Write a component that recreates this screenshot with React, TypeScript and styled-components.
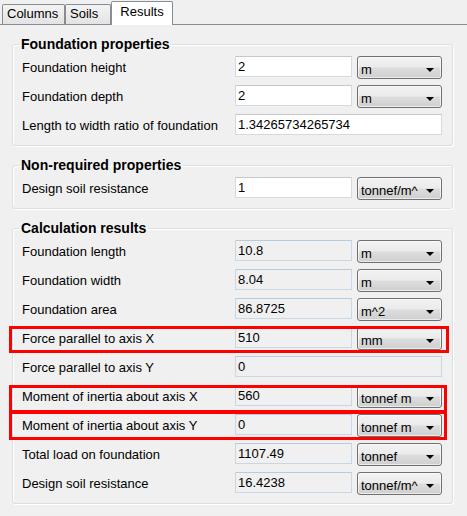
import React from "react";
import styled, { createGlobalStyle, css } from "styled-components";

const Global = createGlobalStyle`
  html, body { margin: 0; padding: 0; background: #f0f0f0; }
  body { font-family: "Liberation Sans", Arial, sans-serif; font-size: 13px; color: #000; }
  * { box-sizing: border-box; }
`;

const Window = styled.div`
  width: 467px;
  height: 516px;
  background: #f0f0f0;
  overflow: hidden;
`;

const TabStrip = styled.div`
  display: flex;
  align-items: flex-end;
  height: 25px;
  padding-left: 2px;
  border-bottom: 1px solid #898c95;
`;

const Tab = styled.div<{ $active?: boolean; $w: number; $ml?: number }>`
  width: ${(p) => p.$w}px;
  margin-left: ${(p) => p.$ml ?? 0}px;
  border: 1px solid #898c95;
  border-bottom: none;
  border-radius: 2px 2px 0 0;
  white-space: nowrap;
  line-height: 15px;
  ${(p) =>
    p.$active
      ? css`
          height: 24px;
          margin-bottom: -1px;
          background: #ffffff;
          padding-top: 2px;
          text-align: center;
          position: relative;
        `
      : css`
          height: 20px;
          background: linear-gradient(#f3f3f3, #e3e3e3);
          padding-top: 1px;
          padding-left: 4px;
        `}
`;

const Page = styled.div`
  padding: 11px 0 0 12px;
  display: flex;
  flex-direction: column;
  gap: 11px;
`;

const Group = styled.fieldset`
  margin: 0;
  min-width: 0;
  width: 441px;
  border: 1px solid #d5dfe5;
  border-radius: 3px;
  box-shadow: inset 1px 1px 0 #ffffff, 1px 1px 0 #ffffff;
  padding: 4px 0 8px 9px;
  display: flex;
  flex-direction: column;
  gap: 6px;
`;

const Legend = styled.legend`
  font-weight: bold;
  font-size: 14px;
  line-height: 16px;
  padding: 0 2px;
  margin-left: -3px;
`;

const Row = styled.div<{ $hl?: { t: number; b: number; r: number } }>`
  position: relative;
  display: grid;
  grid-template-columns: 208px 117px 85px;
  column-gap: 5px;
  height: 23px;
  align-items: start;
  ${(p) =>
    p.$hl &&
    css`
      &::after {
        content: "";
        position: absolute;
        left: -13px;
        top: ${p.$hl.t}px;
        bottom: ${p.$hl.b}px;
        right: ${p.$hl.r}px;
        border: 3px solid #ff0000;
        pointer-events: none;
      }
    `}
`;

const Label = styled.div`
  line-height: 15px;
  padding-top: 4px;
  white-space: nowrap;
`;

const Field = styled.div<{ $readOnly?: boolean; $wide?: boolean }>`
  height: 21px;
  border: 1px solid ${(p) => (p.$readOnly ? "#c9d7e4" : "#d6dadf")};
  border-top-color: ${(p) => (p.$readOnly ? "#b5cbe0" : "#c4c8ce")};
  background: ${(p) => (p.$readOnly ? "#f0f0f0" : "#ffffff")};
  padding: 2px 2px 0;
  line-height: 15px;
  white-space: nowrap;
  overflow: hidden;
  ${(p) => p.$wide && css`grid-column: 2 / span 2;`}
`;

const Combo = styled.div`
  height: 23px;
  border: 1px solid #707070;
  border-radius: 3px;
  background: linear-gradient(#f2f2f2 0%, #ebebeb 48%, #dddddd 52%, #cfcfcf 100%);
  box-shadow: inset 0 0 0 1px rgba(255, 255, 255, 0.6);
  display: flex;
  align-items: center;
  justify-content: space-between;
  padding: 1px 7px 0 3px;
  line-height: 15px;
  white-space: nowrap;
  overflow: hidden;
`;

const ComboText = styled.span`
  padding-top: 2px;
`;

const Arrow = () => (
  <svg width="8" height="4" viewBox="0 0 8 4" style={{ marginTop: 3, flex: "none" }}>
    <path d="M0 0H8L4 4Z" fill="#000" />
  </svg>
);

type RowData = {
  label: string;
  value: string;
  unit?: string;
  readOnly?: boolean;
  hl?: { t: number; b: number; r: number };
};

const FieldRow = ({ label, value, unit, readOnly, hl }: RowData) => (
  <Row $hl={hl}>
    <Label>{label}</Label>
    <Field $readOnly={readOnly} $wide={!unit}>
      {value}
    </Field>
    {unit && (
      <Combo>
        <ComboText>{unit}</ComboText>
        <Arrow />
      </Combo>
    )}
  </Row>
);

const props1: RowData[] = [
  { label: "Foundation height", value: "2", unit: "m" },
  { label: "Foundation depth", value: "2", unit: "m" },
  { label: "Length to width ratio of foundation", value: "1.34265734265734" },
];

const props2: RowData[] = [
  { label: "Design soil resistance", value: "1", unit: "tonnef/m^" },
];

const results: RowData[] = [
  { label: "Foundation length", value: "10.8", unit: "m", readOnly: true },
  { label: "Foundation width", value: "8.04", unit: "m", readOnly: true },
  { label: "Foundation area", value: "86.8725", unit: "m^2", readOnly: true },
  { label: "Force parallel to axis X", value: "510", unit: "mm", readOnly: true, hl: { t: -1, b: -3, r: 3 } },
  { label: "Force parallel to axis Y", value: "0", readOnly: true },
  { label: "Moment of inertia about axis X", value: "560", unit: "tonnef m", readOnly: true, hl: { t: 0, b: -5, r: 5 } },
  { label: "Moment of inertia about axis Y", value: "0", unit: "tonnef m", readOnly: true, hl: { t: -3, b: -3, r: 5 } },
  { label: "Total load on foundation", value: "1107.49", unit: "tonnef", readOnly: true },
  { label: "Design soil resistance", value: "16.4238", unit: "tonnef/m^", readOnly: true },
];

export default function App() {
  return (
    <Window>
      <Global />
      <TabStrip>
        <Tab $w={63}>Columns</Tab>
        <Tab $w={46}>Soils</Tab>
        <Tab $w={62} $active>
          Results
        </Tab>
      </TabStrip>
      <Page>
        <Group>
          <Legend>Foundation properties</Legend>
          {props1.map((r) => (
            <FieldRow key={r.label} {...r} />
          ))}
        </Group>
        <Group>
          <Legend>Non-required properties</Legend>
          {props2.map((r) => (
            <FieldRow key={r.label} {...r} />
          ))}
        </Group>
        <Group>
          <Legend>Calculation results</Legend>
          {results.map((r) => (
            <FieldRow key={r.label} {...r} />
          ))}
        </Group>
      </Page>
    </Window>
  );
}
